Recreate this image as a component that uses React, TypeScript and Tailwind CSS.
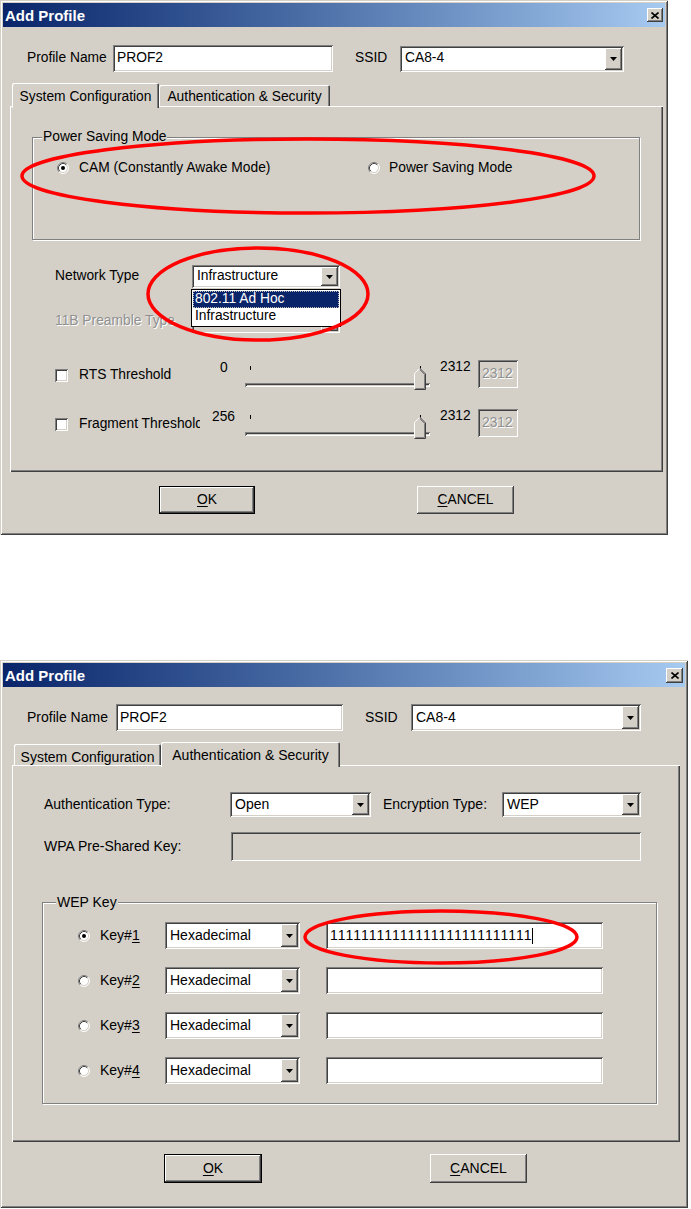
import React from "react";

const SUNKEN =
  "shadow-[inset_1px_1px_0_#808080,inset_-1px_-1px_0_#ffffff,inset_2px_2px_0_#404040,inset_-2px_-2px_0_#d4d0c8]";
const RAISED =
  "shadow-[inset_-1px_-1px_0_#404040,inset_1px_1px_0_#ffffff,inset_-2px_-2px_0_#808080,inset_2px_2px_0_#d4d0c8]";
const ETCHED = "border border-[#808080] shadow-[inset_1px_1px_0_#ffffff,1px_1px_0_#ffffff]";
const FRAME =
  "shadow-[inset_1px_1px_0_#d4d0c8,inset_-1px_-1px_0_#404040,inset_2px_2px_0_#ffffff,inset_-2px_-2px_0_#808080]";
const PANEL = "shadow-[inset_1px_1px_0_#ffffff,inset_-1px_-1px_0_#404040,inset_-2px_-2px_0_#808080]";
const TAB = "shadow-[inset_1px_1px_0_#ffffff,inset_-1px_0_0_#404040,inset_-2px_0_0_#808080]";
const DIS = "text-[#909090] [text-shadow:1px_1px_0_#ffffff]";

function DownArrow() {
  return (
    <svg width="7" height="4" viewBox="0 0 7 4">
      <path d="M0 0H7L3.5 4Z" fill="#000" />
    </svg>
  );
}

function Combo({ className, text, disabled }: { className: string; text?: string; disabled?: boolean }) {
  return (
    <div className={`flex p-[2px] ${disabled ? "bg-[#d4d0c8]" : "bg-white"} ${SUNKEN} ${className}`}>
      <div className="flex-1 flex items-center pl-[3px] overflow-hidden whitespace-nowrap text-black">{text}</div>
      <div className={`w-[17px] bg-[#d4d0c8] ${RAISED} flex items-center justify-center`}>
        <DownArrow />
      </div>
    </div>
  );
}

function TextBox({ className, children, disabled }: { className: string; children?: React.ReactNode; disabled?: boolean }) {
  return (
    <div
      className={`flex items-center pl-[4px] overflow-hidden whitespace-nowrap ${
        disabled ? "bg-[#d4d0c8]" : "bg-white text-black"
      } ${SUNKEN} ${className}`}
    >
      {children}
    </div>
  );
}

function Radio({ checked }: { checked?: boolean }) {
  return (
    <svg width="12" height="12" viewBox="0 0 12 12" className="shrink-0">
      <circle cx="6" cy="6" r="5" fill="#ffffff" />
      <path d="M2.11 9.89A5.5 5.5 0 0 1 9.89 2.11" fill="none" stroke="#808080" />
      <path d="M2.11 9.89A5.5 5.5 0 0 0 9.89 2.11" fill="none" stroke="#ffffff" />
      <path d="M2.82 9.18A4.5 4.5 0 0 1 9.18 2.82" fill="none" stroke="#404040" />
      <path d="M2.82 9.18A4.5 4.5 0 0 0 9.18 2.82" fill="none" stroke="#d4d0c8" />
      {checked && <circle cx="6" cy="6" r="2" fill="#000" />}
    </svg>
  );
}

function Checkbox() {
  return <div className={`w-[13px] h-[13px] shrink-0 bg-white ${SUNKEN}`} />;
}

function CloseBtn({ className }: { className: string }) {
  return (
    <div className={`bg-[#d4d0c8] ${RAISED} flex items-center justify-center ${className}`}>
      <svg width="8" height="7" viewBox="0 0 8 7">
        <path d="M0.5 0.5L7.5 6.5M7.5 0.5L0.5 6.5" stroke="#000" strokeWidth="1.6" />
      </svg>
    </div>
  );
}

function TitleBar({ close }: { close: string }) {
  return (
    <div className="h-[24px] flex items-center justify-between bg-linear-to-r from-[#0a246a] to-[#a6caf0] pl-[2px] pr-[2px]">
      <span className="text-white font-bold text-[15px] leading-none">Add Profile</span>
      <CloseBtn className={close} />
    </div>
  );
}

function Button({ children, def, className }: { children: React.ReactNode; def?: boolean; className: string }) {
  return (
    <div className={`${def ? "border border-black" : ""} ${className}`}>
      <div className={`w-full h-full flex items-center justify-center bg-[#d4d0c8] ${RAISED} text-black`}>
        {children}
      </div>
    </div>
  );
}

function Thumb() {
  return (
    <svg width="12" height="22" viewBox="0 0 12 22">
      <path d="M6 0L11.5 5.5V21.5H0.5V5.5Z" fill="#d4d0c8" />
      <path d="M0.5 21V5.5L6 0" fill="none" stroke="#ffffff" />
      <path d="M6 0.5L11.5 6V21.5H0.5" fill="none" stroke="#404040" />
      <path d="M6 2L10.5 6.5V20.5H1.5" fill="none" stroke="#808080" />
    </svg>
  );
}

function Slider() {
  return (
    <div className="relative w-[190px] h-[34px] shrink-0">
      <div className="flex justify-between pl-[7px] pr-[12px] pt-[8px]">
        <div className="w-[1px] h-[4px] bg-black" />
        <div className="w-[1px] h-[4px] bg-black" />
      </div>
      <div className={`mt-[13px] ml-[2px] w-[185px] h-[4px] ${SUNKEN}`} />
      <div className="absolute left-[171px] top-[10px]">
        <Thumb />
      </div>
    </div>
  );
}

function ThresholdRow({ label, min, minPad }: { label: string; min: string; minPad: string }) {
  return (
    <div className="flex h-[34px]">
      <div className="ml-[45px] w-[155px] flex items-center shrink-0">
        <Checkbox />
        <span className="ml-[11px] w-[121px] overflow-hidden whitespace-nowrap">{label}</span>
      </div>
      <div className={`w-[33px] shrink-0 mt-[2px] leading-[16px] ${minPad}`}>{min}</div>
      <Slider />
      <div className="ml-[7px] mt-[1px] w-[38px] leading-[16px] shrink-0">2312</div>
      <TextBox disabled className={`w-[40px] h-[28px] mt-[2px] ${DIS}`}>
        2312
      </TextBox>
    </div>
  );
}

function Ellipse({ cx, cy, rx, ry }: { cx: number; cy: number; rx: number; ry: number }) {
  return <ellipse cx={cx} cy={cy} rx={rx} ry={ry} fill="none" stroke="#ff0000" strokeWidth="3.5" />;
}

function Dialog1() {
  return (
    <div className={`relative w-[668px] h-[535px] bg-[#d4d0c8] p-[3px] ${FRAME} text-[13.8px] text-black`}>
      <TitleBar close="w-[16px] h-[14px]" />
      <div className="mt-[18px] flex items-center h-[27px]">
        <span className="ml-[24px] w-[86px]">Profile Name</span>
        <TextBox className="w-[220px] h-[27px]">PROF2</TextBox>
        <span className="ml-[22px] w-[45px]">SSID</span>
        <Combo className="w-[224px] h-[26px]" text="CA8-4" />
      </div>
      <div className="mt-[11px] ml-[9px] h-[23px] flex items-end">
        <div
          className={`relative z-10 w-[147px] h-[25px] -mb-[2px] bg-[#d4d0c8] rounded-t-[2px] ${TAB} flex justify-center pt-[4px] whitespace-nowrap`}
        >
          System Configuration
        </div>
        <div className={`w-[171px] h-[21px] rounded-t-[2px] ${TAB} flex justify-center pt-[2px] whitespace-nowrap`}>
          Authentication &amp; Security
        </div>
      </div>
      <div className={`ml-[7px] w-[653px] h-[366px] ${PANEL} pt-[31px] flex flex-col`}>
        <div className={`ml-[22px] w-[608px] h-[103px] ${ETCHED}`}>
          <div className="-mt-[9px] ml-[9px] px-[1px] bg-[#d4d0c8] w-fit leading-[16px]">Power Saving Mode</div>
          <div className="mt-[15px] flex items-center h-[16px]">
            <div className="ml-[24px] w-[311px] flex items-center">
              <Radio checked />
              <span className="ml-[10px]">CAM (Constantly Awake Mode)</span>
            </div>
            <Radio />
            <span className="ml-[9px]">Power Saving Mode</span>
          </div>
        </div>
        <div className="mt-[25px] flex items-center h-[23px]">
          <span className="ml-[45px] w-[137px]">Network Type</span>
          <div className="relative">
            <Combo className="w-[148px] h-[23px]" text="Infrastructure" />
            <div className="absolute left-[-1px] top-[24px] w-[150px] bg-white border border-black z-20 p-[1px]">
              <div className="h-[17px] bg-[#0a246a] text-white flex items-center pl-[2px] outline outline-1 outline-dotted outline-[#c0c0c0] -outline-offset-1">
                802.11 Ad Hoc
              </div>
              <div className="h-[17px] flex items-center pl-[2px]">Infrastructure</div>
            </div>
          </div>
        </div>
        <div className="mt-[22px] flex items-center h-[23px]">
          <span className={`ml-[45px] w-[137px] ${DIS}`}>11B Preamble Type</span>
          <Combo disabled className="w-[148px] h-[23px]" />
        </div>
        <div className="mt-[25px]">
          <ThresholdRow label="RTS Threshold" min="0" minPad="pl-[10px]" />
        </div>
        <div className="mt-[15px]">
          <ThresholdRow label="Fragment Threshold" min="256" minPad="pl-[2px]" />
        </div>
      </div>
      <div className="mt-[14px] flex h-[28px]">
        <Button def className="ml-[156px] w-[96px] h-[28px]">
          <span>
            <span className="underline underline-offset-2">O</span>K
          </span>
        </Button>
        <Button className="ml-[162px] w-[97px] h-[28px]">
          <span>
            <span className="underline underline-offset-2">C</span>ANCEL
          </span>
        </Button>
      </div>
      <svg className="absolute left-0 top-0 pointer-events-none z-30" width="668" height="535">
        <Ellipse cx={308} cy={176} rx={286} ry={37} />
        <Ellipse cx={258} cy={294} rx={110} ry={46} />
      </svg>
    </div>
  );
}

function KeyRow({ n, first, value }: { n: number; first?: boolean; value?: string }) {
  return (
    <div className={`${first ? "mt-[12px]" : "mt-[18px]"} flex items-center h-[27px]`}>
      <div className="ml-[35px]">
        <Radio checked={first} />
      </div>
      <span className="ml-[10px] w-[65px]">
        Key#<span className="underline underline-offset-2">{n}</span>
      </span>
      <Combo className="w-[135px] h-[27px]" text="Hexadecimal" />
      <TextBox className="ml-[26px] w-[277px] h-[27px]">
        {value && <span className="tracking-[1px]">{value}</span>}
        {value && <span className="inline-block w-[1px] h-[16px] bg-black" />}
      </TextBox>
    </div>
  );
}

function Dialog2() {
  return (
    <div className={`relative w-[688px] h-[548px] bg-[#d4d0c8] p-[3px] ${FRAME} text-[14px] text-black`}>
      <TitleBar close="w-[17px] h-[15px]" />
      <div className="mt-[17px] flex items-center h-[27px]">
        <span className="ml-[24px] w-[89px]">Profile Name</span>
        <TextBox className="w-[227px] h-[27px]">PROF2</TextBox>
        <span className="ml-[22px] w-[46px]">SSID</span>
        <Combo className="w-[230px] h-[27px]" text="CA8-4" />
      </div>
      <div className="mt-[11px] ml-[11px] h-[23px] flex items-end">
        <div className={`w-[147px] h-[21px] rounded-t-[2px] ${TAB} flex justify-center pt-[3px] whitespace-nowrap`}>
          System Configuration
        </div>
        <div
          className={`relative z-10 w-[179px] h-[25px] -mb-[2px] bg-[#d4d0c8] rounded-t-[2px] ${TAB} flex justify-center pt-[3px] whitespace-nowrap`}
        >
          Authentication &amp; Security
        </div>
      </div>
      <div className={`ml-[9px] w-[668px] h-[377px] ${PANEL} pt-[27px] flex flex-col`}>
        <div className="flex items-center h-[25px]">
          <span className="ml-[32px] w-[186px]">Authentication Type:</span>
          <Combo className="w-[141px] h-[25px]" text="Open" />
          <span className="ml-[12px] w-[119px]">Encryption Type:</span>
          <Combo className="w-[139px] h-[25px]" text="WEP" />
        </div>
        <div className="mt-[15px] flex items-center h-[29px]">
          <span className="ml-[32px] w-[187px]">WPA Pre-Shared Key:</span>
          <TextBox disabled className="w-[410px] h-[29px]" />
        </div>
        <div className={`mt-[41px] ml-[30px] w-[615px] h-[202px] ${ETCHED}`}>
          <div className="-mt-[9px] ml-[13px] px-[1px] bg-[#d4d0c8] w-fit leading-[16px]">WEP Key</div>
          <KeyRow n={1} first value="11111111111111111111111111" />
          <KeyRow n={2} />
          <KeyRow n={3} />
          <KeyRow n={4} />
        </div>
      </div>
      <div className="mt-[12px] flex h-[29px]">
        <Button def className="ml-[161px] w-[98px] h-[29px]">
          <span>
            <span className="underline underline-offset-2">O</span>K
          </span>
        </Button>
        <Button className="ml-[168px] w-[97px] h-[29px]">
          <span>
            <span className="underline underline-offset-2">C</span>ANCEL
          </span>
        </Button>
      </div>
      <svg className="absolute left-0 top-0 pointer-events-none z-30" width="688" height="548">
        <Ellipse cx={441} cy={277} rx={136} ry={26} />
      </svg>
    </div>
  );
}

export default function App() {
  return (
    <div className="w-[691px] h-[1209px] bg-white font-['Liberation_Sans',Arial,sans-serif] overflow-hidden">
      <Dialog1 />
      <div className="mt-[125px]">
        <Dialog2 />
      </div>
    </div>
  );
}
